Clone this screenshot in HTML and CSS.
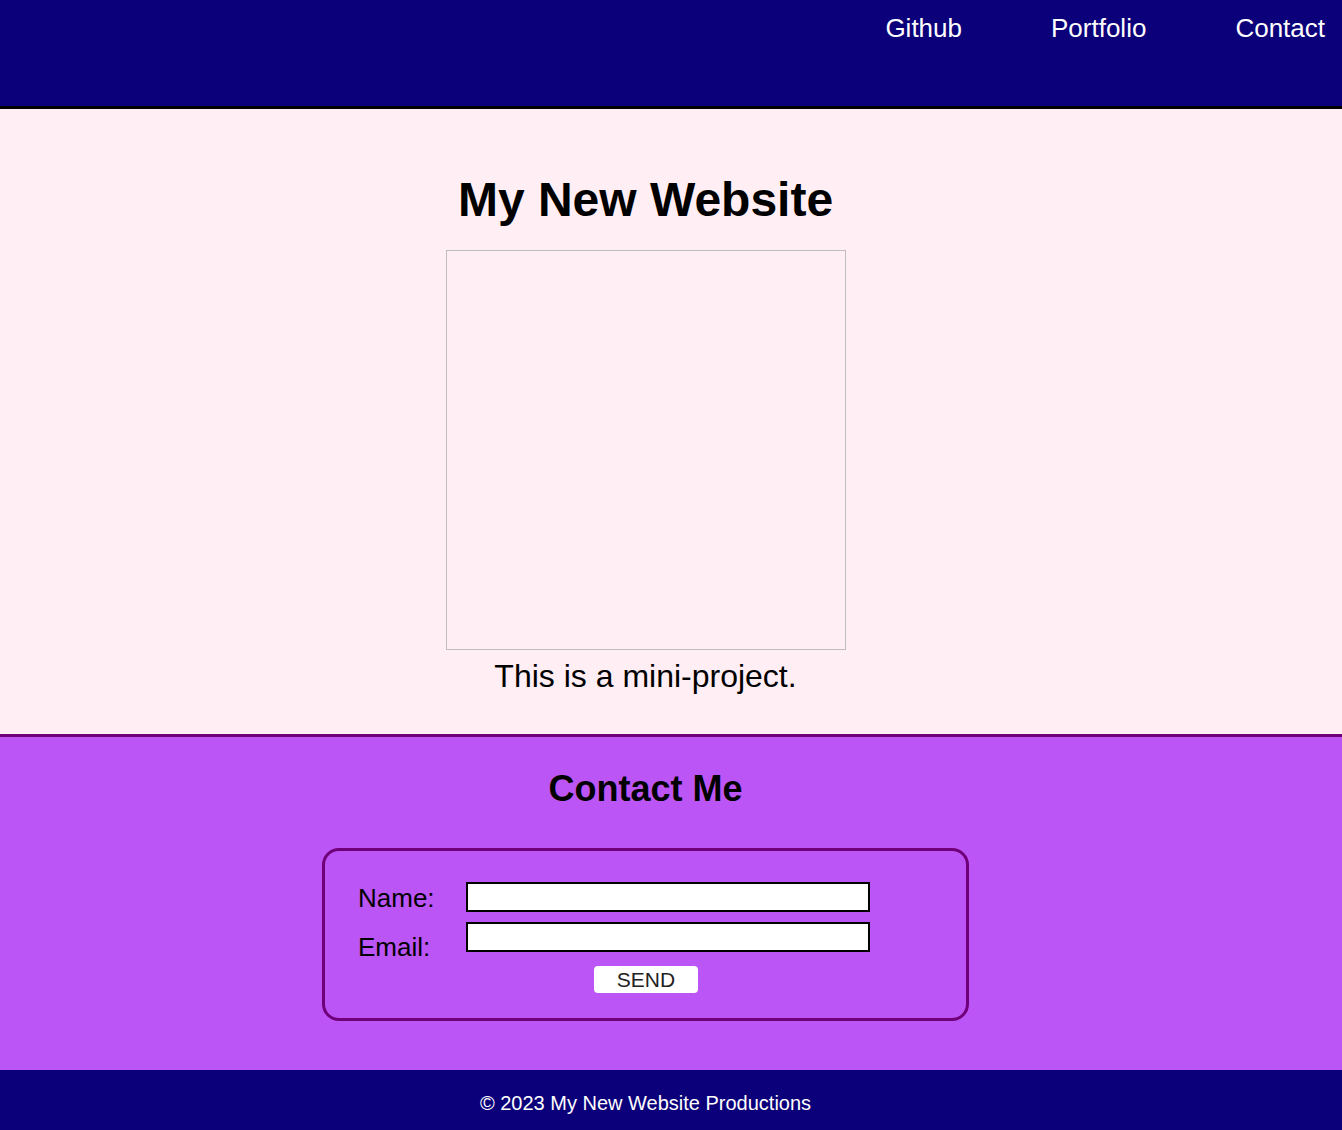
FILE: index.html
```html
<!DOCTYPE html>
<html lang="en">
<head>
  <meta charset="UTF-8">
  <meta name="viewport" content="width=device-width, initial-scale=1.0">
  <title>My New Website</title>
  <link rel="stylesheet" href="styles.css">
</head>
<body>

<header class="top">
  <nav class="nav">
    <a href="#">Github</a>
    <a href="#">Portfolio</a>
    <a href="#">Contact</a>
  </nav>
</header>

<section class="hero">
  <h1>My New Website</h1>
  <div class="picture"></div>
  <p class="caption">This is a mini-project.</p>
</section>

<section class="contact">
  <h2>Contact Me</h2>
  <form class="contact-form">
    <div class="labels">
      <label for="name">Name:</label>
      <label for="email">Email:</label>
    </div>
    <div class="fields">
      <input type="text" id="name">
      <input type="email" id="email">
      <button type="button" class="send">SEND</button>
    </div>
  </form>
</section>

<footer class="bottom">
  <p>&copy; 2023 My New Website Productions</p>
</footer>

</body>
</html>
```

FILE: styles.css
```css
body {
  margin: 0;
  font-family: "Liberation Sans", Arial, sans-serif;
}

.top {
  background: #0b007a;
  height: 106px;
  border-bottom: 3px solid #000;
}
.nav {
  display: flex;
  justify-content: flex-end;
  gap: 89px;
  padding: 13px 17px 0 0;
}
.nav a {
  color: #fff;
  text-decoration: none;
  font-size: 26px;
}

.hero {
  background: #ffeef3;
  padding: 63px 51px 38px 0;
  display: flex;
  flex-direction: column;
  align-items: center;
}
.hero h1 {
  margin: 0 0 22px;
  font-size: 48px;
  line-height: 56px;
}
.picture {
  width: 398px;
  height: 398px;
  border: 1px solid #bdbdbd;
}
.caption {
  margin: 6px 0 0;
  font-size: 32px;
  line-height: 40px;
}

.contact {
  background: #bc55f5;
  border-top: 3px solid #70007a;
  padding: 31px 51px 49px 0;
  display: flex;
  flex-direction: column;
  align-items: center;
}
.contact h2 {
  margin: 0 0 38px;
  font-size: 36px;
  line-height: 42px;
}
.contact-form {
  width: 575px;
  border: 3px solid #70007a;
  border-radius: 17px;
  padding: 31px 33px 25px 33px;
  display: flex;
  gap: 30px;
}
.labels {
  display: flex;
  flex-direction: column;
  margin-top: -8px;
  width: 78px;
}
.labels label {
  font-size: 26px;
  line-height: 49px;
}
.fields {
  display: flex;
  flex-direction: column;
  gap: 10px;
  width: 404px;
}
.fields input {
  box-sizing: border-box;
  width: 404px;
  height: 30px;
  border: 2px solid #000;
  background: #fff;
  margin: 0;
}
.send {
  align-self: flex-start;
  margin: 4px 0 0 128px;
  width: 104px;
  height: 27px;
  background: #fff;
  border: none;
  border-radius: 4px;
  font-family: "Liberation Sans", Arial, sans-serif;
  font-size: 21px;
  color: #222;
  padding: 0;
}

.bottom {
  background: #0b007a;
  height: 60px;
  padding-right: 51px;
  display: flex;
  align-items: center;
  justify-content: center;
}
.bottom p {
  margin: 6px 0 0;
  color: #fff;
  font-size: 20px;
}
```
